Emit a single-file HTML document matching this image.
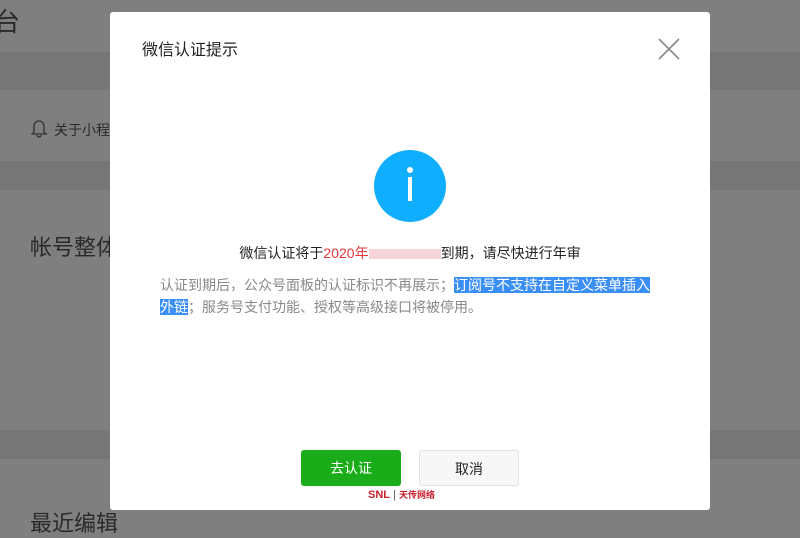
<!DOCTYPE html>
<html><head><meta charset="utf-8"><style>
*{margin:0;padding:0;box-sizing:border-box}
body{width:800px;height:533px;overflow:hidden;background:#7f7f7f;font-family:"Liberation Sans","Noto Sans CJK SC",sans-serif;position:relative}
.band{position:absolute;left:0;width:800px;background:#767676}
.t{position:absolute;color:#2a2a2a}
.modal{position:absolute;left:110px;top:12px;width:600px;height:498px;background:#fff;border-radius:3px}
.mt{position:absolute;left:32px;top:24px;font-size:16px;color:#222}
.x{position:absolute;left:548px;top:26px}
.ic{position:absolute;left:264px;top:138px;width:72px;height:72px;border-radius:50%;background:#10aeff}
.ic i{position:absolute;left:34px;top:27px;width:4px;height:24px;background:#fff}
.ic b{position:absolute;left:33px;top:17px;width:6px;height:6px;border-radius:50%;background:#fff}
.l1{position:absolute;left:0;width:600px;top:231px;text-align:center;font-size:14px;color:#222}
.l2{position:absolute;left:50px;top:262px;width:500px;font-size:14px;line-height:22px;color:#888}
.hl{background:#3a8ff7;color:#fff}
.btn{position:absolute;top:438px;width:100px;height:36px;border-radius:3px;font-size:14px;text-align:center;line-height:36px}
</style></head><body>
<div class="band" style="top:52px;height:38px"></div>
<div class="band" style="top:161px;height:29px"></div>
<div class="band" style="top:430px;height:29px"></div>
<div class="t" style="left:-6px;top:2px;font-size:26px">台</div>
<svg style="position:absolute;left:30px;top:118px" width="18" height="20" viewBox="0 0 18 20"><path d="M4 14V8a5 5 0 0 1 10 0v6l2 2H2z M7 17a2 2 0 0 0 4 0" fill="none" stroke="#333" stroke-width="1.3"/></svg>
<div class="t" style="left:54px;top:120px;font-size:14px">关于小程</div>
<div class="t" style="left:30px;top:230px;font-size:22px">帐号整体</div>
<div class="t" style="left:30px;top:506px;font-size:22px">最近编辑</div>
<div class="modal">
<div class="mt">微信认证提示</div>
<svg class="x" width="22" height="22" viewBox="0 0 22 22"><path d="M1 1L21 21M21 1L1 21" stroke="#888" stroke-width="1.6"/></svg>
<div class="ic"><b></b><i></i></div>
<div class="l1">微信认证将于<span style="color:#e5383b">2020年</span><span style="display:inline-block;width:72px;height:10px;background:#f7d5d7;vertical-align:middle"></span>到期，请尽快进行年审</div>
<div class="l2">认证到期后，公众号面板的认证标识不再展示；<span class="hl">订阅号不支持在自定义菜单插入外链</span>；服务号支付功能、授权等高级接口将被停用。</div>
<div class="btn" style="left:191px;background:#1aad19;color:#fff">去认证</div>
<div class="btn" style="left:309px;background:#f7f7f7;border:1px solid #e2e2e2;color:#222">取消</div>
<div style="position:absolute;left:258px;top:476px;font-size:11px;font-weight:bold;color:#c8202f">SNL<span style="color:#555;font-weight:normal"> | </span><span style="font-size:9px">天传网络</span></div>
</div>
</body></html>
